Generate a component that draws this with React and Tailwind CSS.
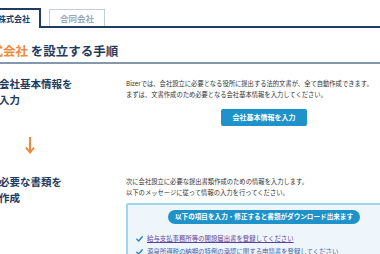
const navy = 'text-[#1e3a5f]';

const Check = () => (
  <svg width="7" height="6" viewBox="0 0 7 6" className="shrink-0">
    <path d="M0.8 3.2 L2.7 5 L6.2 0.8" fill="none" stroke="#2a86cc" strokeWidth="1.4" strokeLinecap="round" strokeLinejoin="round" />
  </svg>
);

const App = () => {
  return (
    <div className="w-[380px] h-[254px] overflow-hidden bg-white font-['Noto_Sans_CJK_JP',sans-serif]">
      {/* Tabs */}
      <div className="pt-2 flex items-end border-b-2 border-[#1f3d62]">
        <div className="-ml-[22px] w-[63px] h-[20px] -mb-[2px] bg-white border-t-2 border-r-2 border-[#1f3d62] flex items-center justify-end pr-[9px]">
          <span className={`text-[8px] font-bold leading-none ${navy}`}>株式会社</span>
        </div>
        <div className="ml-[8px] w-[56px] h-[17px] border border-b-0 border-[#c3ced9] bg-white flex items-center justify-center">
          <span className="text-[8.5px] font-bold leading-none text-[#9aa9ba]">合同会社</span>
        </div>
      </div>

      {/* Title */}
      <div className="mt-[15px] pb-[3px] border-b-2 border-[#8398ae]">
        <h1 className="-ml-[22px] text-[12.5px] leading-[16px] font-bold whitespace-nowrap">
          <span className="text-[#f08a3c]">株式会社</span>
          <span className={navy}> を設立する手順</span>
        </h1>
      </div>

      {/* Step 1 */}
      <div className="mt-[12px] flex">
        <div className="-ml-[1px] w-[127px] shrink-0">
          <h2 className={`text-[10.5px] leading-[16px] font-bold ${navy}`}>
            会社基本情報を<br />入力
          </h2>
        </div>
        <div className="w-[276px] shrink-0 pt-[2px]">
          <p className="text-[6.3px] leading-[11px] text-[#333] whitespace-nowrap">
            Bizerでは、会社設立に必要となる役所に提出する法的文書が、全て自動作成できます。<br />
            まずは、文書作成のため必要となる会社基本情報を入力してください。
          </p>
          <div className="mt-[9px] flex justify-center">
            <button className="w-[86px] h-[17px] bg-[#1f93c9] rounded-[2px] text-white text-[7px] font-bold leading-none flex items-center justify-center">
              会社基本情報を入力
            </button>
          </div>
        </div>
      </div>

      {/* Arrow */}
      <div className="mt-[11px] ml-[25px] h-[16px]">
        <svg width="10" height="17" viewBox="0 0 10 17">
          <path d="M5 0 V15" stroke="#f08a3c" strokeWidth="2" />
          <path d="M1 10.5 L5 15.5 L9 10.5" fill="none" stroke="#f08a3c" strokeWidth="2" />
        </svg>
      </div>

      {/* Step 2 */}
      <div className="mt-[21px] flex">
        <div className="-ml-[1px] w-[127px] shrink-0">
          <h2 className={`text-[10.5px] leading-[16px] font-bold ${navy}`}>
            必要な書類を<br />作成
          </h2>
        </div>
        <div className="w-[276px] shrink-0 pt-[1.5px]">
          <p className="text-[6.3px] leading-[11px] text-[#333] whitespace-nowrap">
            次に会社設立に必要な提出書類作成のための情報を入力します。<br />
            以下のメッセージに従って情報の入力を行ってください。
          </p>
          <div className="mt-[5px] border-2 border-[#9fd4ef] bg-[#eef6fb] rounded-[2px] pt-[5px] pl-[8px] pb-2">
            <div className="-ml-[8px] flex justify-center">
              <div className="w-[192px] h-[14px] rounded-full bg-[#1f93c9] flex items-center justify-center">
                <span className="text-white text-[6.6px] font-bold leading-none whitespace-nowrap">
                  以下の項目を入力・修正すると書類がダウンロード出来ます
                </span>
              </div>
            </div>
            <ul className="mt-[9px] flex flex-col">
              <li className="flex items-center gap-[4px] h-[13px]">
                <Check />
                <a href="#" className="text-[6.4px] leading-none underline text-[#5d3f9c] whitespace-nowrap">
                  給与支払事務所等の開設届出書を登録してください
                </a>
              </li>
              <li className="flex items-center gap-[4px] h-[13px]">
                <Check />
                <a href="#" className="text-[6.4px] leading-none underline text-[#3f5db0] whitespace-nowrap">
                  源泉所得税の納期の特例の承認に関する申請書を登録してください
                </a>
              </li>
            </ul>
          </div>
        </div>
      </div>
    </div>
  );
};

export default App;
